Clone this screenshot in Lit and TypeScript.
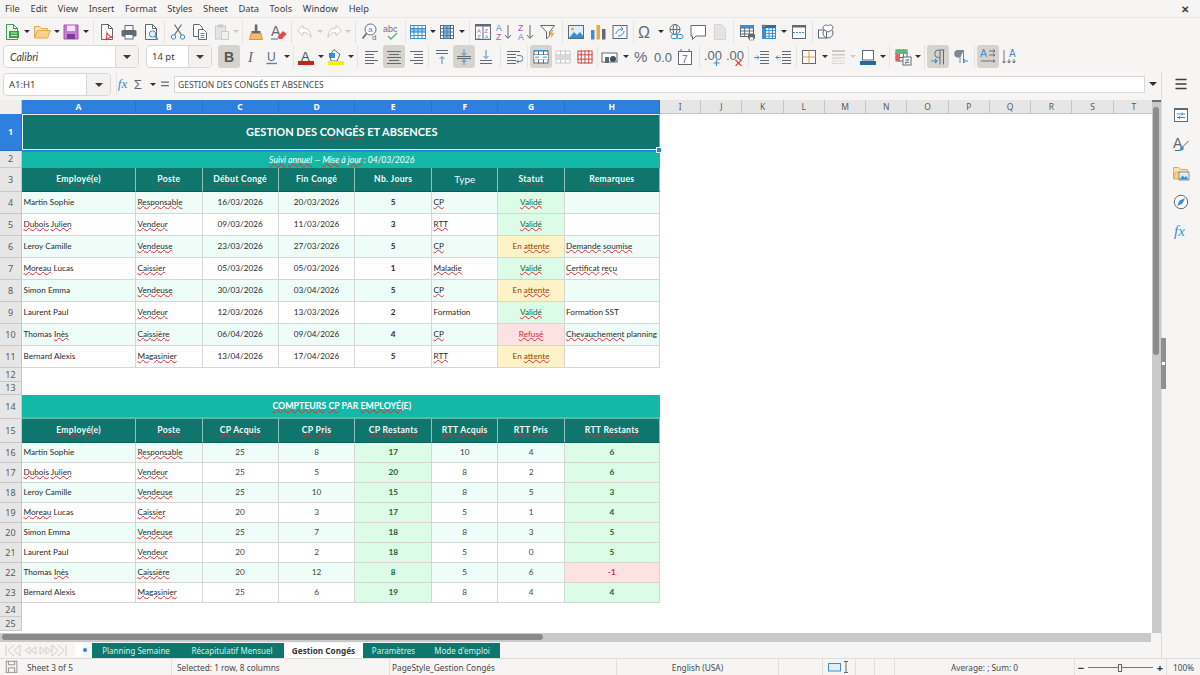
import { css, html, svg, LitElement } from "lit";
import { customElement } from "lit/decorators.js";

const G = "#5f6a75";
const B = "#3b8ed0";
const LG = "#c9c9c9";

const line = (x1: number, y1: number, x2: number, y2: number, c = G, w = 1) =>
  svg`<path d="M${x1} ${y1}L${x2} ${y2}" stroke=${c} stroke-width=${w} fill="none"/>`;
const lines = (x1: number, x2: number, ys: number[], c = G) => ys.map((y) => line(x1, y, x2, y, c));
const table = (x: number, y: number, w: number, h: number, nx: number, ny: number, c = G) => svg`
  <rect x=${x + 0.5} y=${y + 0.5} width=${w - 1} height=${h - 1} fill="#fff" stroke=${c}/>
  ${Array.from({ length: nx - 1 }, (_, i) => line(x + ((i + 1) * w) / nx, y, x + ((i + 1) * w) / nx, y + h, c))}
  ${Array.from({ length: ny - 1 }, (_, i) => line(x, y + ((i + 1) * h) / ny, x + w, y + ((i + 1) * h) / ny, c))}`;
const label = (x: number, y: number, t: string, size: number, c = G, extra = "") =>
  svg`<text x=${x} y=${y} font-size=${size} fill=${c} font-family="Liberation Sans, sans-serif" style=${extra}>${t}</text>`;
const doc = (c = G) => svg`<path d="M3.5 1.5h7l4 4v11h-11z" fill="#fff" stroke=${c}/><path d="M10.5 1.5v4h4" fill="none" stroke=${c}/>`;

const icons: Record<string, unknown> = {
  new: svg`<path d="M3.5 1.5h7l4 4v11h-11z" fill="#eef8ee" stroke="#3f9e4d"/><path d="M10.5 1.5v4h4" fill="none" stroke="#3f9e4d"/><rect x="6" y="8" width="10" height="7" fill="#3f9e4d"/><path d="M8 10h6M8 12.500h6" stroke="#cfeccf"/>`,
  open: svg`<path d="M1.500 14V3.500h5l2 2h6V8" fill="#fbe2b4" stroke="#e8a94e"/><path d="M1.500 15l3-7.500h13l-3 7.500z" fill="#fdd08a" stroke="#e8a94e"/>`,
  save: svg`<path d="M2 2h14v14H2z" fill="#c67bd6" stroke="#a550b8"/><rect x="5" y="2.500" width="8" height="5.500" fill="#f6e8f9"/><rect x="5" y="11" width="8" height="5" fill="#7e3d90"/>`,
  pdf: svg`${doc()}<path d="M9 10c2 3 4 4 6 4-2 0-5 1-7 3 1-3 1-5 1-7z" fill="none" stroke="#d9443f" stroke-width="1.200"/>`,
  print: svg`<path d="M5 7V2.500h8V7" fill="#fff" stroke=${G}/><rect x="1.500" y="7" width="15" height="6.500" rx="1.500" fill=${G}/><rect x="5" y="11.500" width="8" height="4.500" fill="#fff" stroke=${G}/>`,
  preview: svg`${doc()}<circle cx="10.500" cy="11" r="3.200" fill="#e6f2fb" stroke=${B}/><path d="M13 13.500l3 3" stroke=${B} stroke-width="1.400"/>`,
  cut: svg`<circle cx="4.500" cy="14" r="2.200" fill="none" stroke=${B}/><circle cx="13.500" cy="14" r="2.200" fill="none" stroke=${B}/><path d="M5.500 12L12.500 1.500M12.500 12L5.500 1.500" stroke=${G} stroke-width="1.200"/>`,
  copy: svg`<path d="M2.500 1.500h6l3 3v9h-9z" fill="#fff" stroke=${G}/><path d="M7.500 6.500h5l3 3v7h-8z" fill="#fff" stroke=${G}/>${lines(9.5, 13.5, [10.5, 12.5, 14.5], B)}`,
  paste: svg`<rect x="2.500" y="3" width="10" height="13" fill="#e4e4e4" stroke=${LG}/><rect x="5" y="1.500" width="5" height="3" fill=${LG}/><path d="M8.500 8.500h7v8h-7z" fill="#f0f0f0" stroke=${LG}/>`,
  brush: svg`<rect x="7.800" y="1.500" width="2.600" height="6.500" fill=${G}/><rect x="4.500" y="8" width="9" height="2.500" fill=${G}/><path d="M4 10.500h10l1.500 6h-13z" fill="#f5bb6c" stroke="#df9339"/>`,
  clear: svg`${label(2, 13, "A", 14)}${line(2, 16, 9, 16, B, 1.2)}<path d="M8.500 14l5.500-6 3.500 3-4.500 5h-3z" fill="#e34a44"/>`,
  undo: svg`<path d="M7 2.500L1.500 7.500 7 12.500V9.500c4 0 6 1 8 5 0-6-3-9.500-8-9.500z" fill="#fff" stroke=${LG}/>`,
  redo: svg`<path d="M11 2.500l5.500 5-5.500 5V9.500c-4 0-6 1-8 5 0-6 3-9.500 8-9.500z" fill="#fff" stroke=${LG}/>`,
  find: svg`<circle cx="9.500" cy="6.500" r="5.500" fill="#fff" stroke=${G}/>${label(7, 9, "a", 8, B)}<path d="M5.500 10.500l-4 5" stroke=${G} stroke-width="1.600"/>${label(11, 17, "d", 8, G)}`,
  spell: svg`${label(0, 9, "abc", 9, "#7a6a8a")}<path d="M5 13l3 3 6-6" fill="none" stroke="#58b368" stroke-width="1.400"/>`,
  trow: svg`${table(1, 2, 16, 14, 4, 4, B)}<rect x="1" y="6" width="16" height="3.500" fill=${B} opacity=".55"/>`,
  tcol: svg`${table(2, 2, 14, 14, 4, 4, G)}<rect x="6" y="2" width="6" height="14" fill=${B} opacity=".65"/>`,
  sort: svg`<rect x="1.500" y="1.500" width="15" height="15" fill="#fff" stroke=${G}/><rect x="1" y="1" width="16" height="2.500" fill=${G}/>${line(9, 3, 9, 16)}${label(3, 9.5, "A", 6, "#c04fc0")}${label(3, 15.5, "Z", 6, B)}${label(10.5, 9.5, "Z", 6, "#c04fc0")}${label(10.5, 15.5, "A", 6, B)}`,
  asc: svg`${label(1, 8, "A", 8.500, B)}${label(1, 16.5, "Z", 8.500, "#c04fc0")}<path d="M13 2v13M10 12l3 3.500 3-3.500" fill="none" stroke=${G}/>`,
  desc: svg`${label(1, 8, "Z", 8.500, "#c04fc0")}${label(1, 16.5, "A", 8.500, B)}<path d="M13 2v13M10 12l3 3.500 3-3.500" fill="none" stroke=${G}/>`,
  filter: svg`<path d="M1.500 2.500h14l-5 6.500v4l-3 3V9z" fill="#fff" stroke=${G}/><path d="M13 7l-3 5h2.500l-1 4 4-6h-2.500l1.500-3z" fill="#f2a83b"/>`,
  image: svg`<rect x="1.500" y="2.500" width="15" height="13" fill="#dff0fb" stroke=${G}/><circle cx="5.500" cy="6" r="1.500" fill="#f2a83b"/><path d="M2 15l5-6 3 3 3-3 3 4v2z" fill=${B}/>`,
  chart: svg`<rect x="2" y="7" width="3.500" height="9.500" fill=${B}/><rect x="7.500" y="2" width="3.500" height="14.500" fill="#f0a83f"/><rect x="13" y="6" width="3.500" height="10.500" fill=${G}/>`,
  pivot: svg`<rect x="2" y="2.500" width="14" height="13" fill="#f7f7f7" stroke=${G}/><path d="M5 11c0-3 3-5 7-5M12 6l-2-2M12 6l-2 2M13 8c0 3-3 5-6 5" fill="none" stroke=${B}/>`,
  omega: svg`<text x="1" y="15" font-size="16" fill=${G} font-family="Liberation Sans, sans-serif">Ω</text>`,
  link: svg`<circle cx="8" cy="6.500" r="5" fill="#fff" stroke=${G}/><ellipse cx="8" cy="6.500" rx="2" ry="5" fill="none" stroke=${G}/><path d="M3 6.500h10" stroke=${G}/><rect x="4" y="11.500" width="6.500" height="4" rx="2" fill="#fff" stroke=${B}/><rect x="9.500" y="11.500" width="6.500" height="4" rx="2" fill="none" stroke=${B}/>`,
  comment: svg`<path d="M2 2.500h14.500v10.500H7l-3.500 3.500V13H2z" fill="#fff" stroke=${G}/>`,
  headers: svg`<path d="M3.500 1.500h7l4 4v11h-11z" fill="#e4e4e4" stroke="#d6d6d6"/>`,
  prange: svg`${table(2, 2, 14, 12, 3, 4, G)}<rect x="2" y="2" width="14" height="3" fill=${B}/><rect x="10" y="11" width="7" height="5" rx="1" fill=${G}/><rect x="11.500" y="14" width="4" height="3" fill="#fff" stroke=${G} stroke-width=".6"/>`,
  freeze: svg`${table(2, 2, 14, 14, 4, 5, B)}<rect x="2" y="2" width="4" height="14" fill=${B}/><rect x="2" y="2" width="14" height="3" fill="#2a6fa8"/><path d="M4 1v3" stroke="#f0a83f"/>`,
  split: svg`<rect x="2.500" y="2.500" width="13" height="13" fill="#fff" stroke=${G}/><rect x="2" y="2" width="14" height="2.500" fill=${G}/><path d="M3 9.500h12" stroke=${B} stroke-dasharray="2 1"/>`,
  shapes: svg`<rect x="1.500" y="7" width="8" height="8" fill="#fff" stroke=${G}/><circle cx="11" cy="10" r="5" fill="none" stroke=${G}/><path d="M11 3c1.500-2 5-1 5 1.500S13 8 11 9C9 8 6 6.500 6 4.500S9.500 1 11 3z" fill="#fff" stroke=${G}/>`,
  bold: svg`${label(4, 14, "B", 14, "#565656", "font-weight:700")}`,
  italic: svg`<text x="6" y="14" font-size="15" fill=${G} font-style="italic" font-family="Liberation Serif, serif">I</text>`,
  under: svg`${label(4, 13, "U", 12)}${line(3.5, 15.5, 14, 15.5, B, 1.4)}`,
  fcolor: svg`${label(4, 12.5, "A", 13, "#44505a")}<rect x="1" y="13" width="16" height="4" fill="#c9211e"/>`,
  hcolor: svg`<path d="M7 1.500l6 5-3 6.500H4L3 7z" fill="#f7f7f7" stroke=${G}/><rect x="2" y="5" width="6" height="5" fill=${B}/><rect x="1" y="13" width="16" height="4" fill="#f5f000"/>`,
  aleft: svg`${lines(2, 15, [3.5, 12.5])}${lines(2, 11, [6.5, 9.5, 15.5])}`,
  acenter: svg`${lines(2, 16, [3.5, 9.5, 15.5])}${lines(4, 14, [6.5, 12.5])}`,
  aright: svg`${lines(3, 16, [3.5, 12.5])}${lines(7, 16, [6.5, 9.5, 15.5])}`,
  vtop: svg`${lines(3, 15, [2.5, 5.5])}<path d="M9 16V9M6.500 11L9 8.500 11.500 11" fill="none" stroke=${B}/>`,
  vmid: svg`${lines(2, 16, [8.5, 10.5])}<path d="M9 1.500V7M6.500 5L9 7.500 11.500 5M9 17v-5M6.500 14L9 11.500 11.500 14" fill="none" stroke=${B}/>`,
  vbot: svg`${lines(3, 15, [12.5, 15.5])}<path d="M9 2v8M6.500 8L9 10.500 11.500 8" fill="none" stroke=${B}/>`,
  wrap: svg`${lines(2, 15, [3.5])}${lines(2, 11, [6.5, 9.5, 12.5, 15.5])}<path d="M12 7.500h3a2 2 0 0 1 0 6h-3M13.500 12l-2 1.500 2 1.500" fill="none" stroke=${B}/>`,
  merge: svg`${table(1.500, 2.500, 15, 13, 3, 3, G)}<rect x="2" y="7" width="14" height="4.500" fill="#fff"/><path d="M3 9.200h4M11 9.200h4" stroke=${B}/><path d="M2 2.500h14" stroke=${B}/>`,
  mergeoff: svg`${table(1.500, 2.500, 15, 13, 3, 3, LG)}<rect x="2" y="7" width="14" height="4.500" fill="#d8d8d8"/>`,
  split2: svg`${table(1.500, 2.500, 15, 13, 4, 3, "#c9433f")}`,
  currency: svg`<rect x="1" y="5" width="15" height="9" fill="#fff" stroke=${G}/><rect x="4" y="9" width="4" height="6" fill=${G}/><circle cx="12" cy="11" r="3" fill="#44505a"/>`,
  percent: svg`<text x="1" y="14" font-size="15" fill=${G} font-family="Liberation Sans, sans-serif">%</text>`,
  num: svg`<text x="0" y="14" font-size="13" fill=${G} font-family="Liberation Sans, sans-serif">0.0</text>`,
  date: svg`<rect x="2.500" y="3.500" width="13" height="13" fill="#fff" stroke=${G}/><path d="M2 3.500h14M5 1v3M13 1v3" stroke=${G}/>${label(6, 14.5, "7", 10)}`,
  adddec: svg`<text x="0" y="12" font-size="13" fill=${G} font-family="Liberation Sans, sans-serif">.00</text><path d="M12.500 12v6M9.500 15h6" stroke=${B} stroke-width="1.200"/>`,
  deldec: svg`<text x="0" y="12" font-size="13" fill=${G} font-family="Liberation Sans, sans-serif">.00</text><path d="M9.500 12l6 6M15.500 12l-6 6" stroke="#e0443e" stroke-width="1.200"/>`,
  indent: svg`${lines(7, 16, [3.5, 6.5, 9.5, 12.5, 15.5])}<path d="M1 9.500h5M4 7.500l2 2-2 2" fill="none" stroke=${B}/>`,
  outdent: svg`${lines(7, 16, [3.5, 6.5, 9.5, 12.5, 15.5])}<path d="M6 9.500H1M3 7.500l-2 2 2 2" fill="none" stroke=${B}/>`,
  borders: svg`<rect x="2.500" y="2.500" width="13" height="13" fill="#fff" stroke=${G}/><path d="M9 2.500v13M2.500 9h13" stroke="#e8963c"/>`,
  lstyle: svg`<rect x="2" y="2" width="13" height="2" fill=${LG}/><rect x="2" y="6" width="13" height="1.500" fill=${LG}/><path d="M2 10h13" stroke=${LG}/><path d="M2 13h13M2 15.500h13" stroke=${LG} stroke-dasharray="1.500 1"/>`,
  bcolor: svg`<rect x="3.500" y="2.500" width="11" height="9.500" fill="#fff" stroke=${G}/><rect x="1" y="13" width="16" height="4" fill="#1f6aa8"/>`,
  cond: svg`${table(1.500, 1.500, 12, 12, 3, 3, G)}<rect x="2" y="2" width="11" height="4" fill="#6ab377"/><rect x="2" y="6" width="4" height="7" fill="#e0645f"/><rect x="9" y="9" width="8" height="8" fill="#fff" stroke=${G}/><path d="M11 12h4M11 14.500h4M14.500 11l-3 5" stroke=${G} stroke-width=".8"/>`,
  pltr: svg`<path d="M15.500 2H9.500a3.800 3.800 0 0 0 0 7.600h1.500M11 2v14.500M14.500 2v14.500" fill="none" stroke=${G}/><path d="M2 13h6M6 11l2 2-2 2" fill="none" stroke=${B} stroke-width="1.200"/>`,
  prtl: svg`<path d="M13 2H7a3.800 3.800 0 0 0 0 7.600h2z" fill="#7d8892"/><path d="M9 2v13M12.500 2v13" stroke="#7d8892"/><path d="M17 13h-5M14 11l-2 2 2 2" fill="none" stroke=${B}/>`,
  tltr: svg`${label(1, 9, "A", 10.500, B)}<path d="M10 3h6M14 1.500L16 3l-2 1.500M10 7h6M14 5.500L16 7l-2 1.500M2 13h14M14 11.500l2 1.500-2 1.500" fill="none" stroke=${G} stroke-width=".9"/>`,
  ttb: svg`${label(8, 9, "A", 10, B)}<path d="M3 2v13M1.500 13L3 15l1.500-2M8 11v4M6.500 13L8 15l1.500-2M13 11v4M11.500 13L13 15l1.500-2" fill="none" stroke=${G} stroke-width=".9"/>`,
  fx: svg`<text x="2" y="14" font-size="15" fill=${B} font-style="italic" font-family="Liberation Serif, serif">fx</text>`,
  sigma: svg`<text x="3" y="15" font-size="15" fill=${G} font-family="Liberation Sans, sans-serif">Σ</text>`,
  eq: svg`<path d="M4 6.500h10M4 11h10" stroke=${G} stroke-width="1.600"/>`,
  burger: svg`<path d="M3.500 4.500h11M3.500 9h11M3.500 13.500h11" stroke="#3d3d3d" stroke-width="1.300"/>`,
  props: svg`<rect x="2.500" y="2.500" width="13" height="13" fill="#fff" stroke=${G}/><rect x="2" y="2" width="14" height="2" fill=${G}/><path d="M5 8h8M5 11.500h8" stroke=${B}/><path d="M10 6.500v3M7.500 10v3" stroke=${B}/>`,
  styles: svg`${label(1, 13, "A", 14)}<path d="M3 15.500h5" stroke=${G}/><path d="M16.500 6l-6 6" stroke=${G}/><path d="M10.500 11.500c-2 0-2.500 2-3 4 2 .5 4-.5 4.500-2.500z" fill=${B}/>`,
  gallery: svg`<path d="M1.500 15V3.500h5l2 2h7V8" fill="#fbe2b4" stroke="#e8a94e"/><path d="M1.500 15l2-7h5v7z" fill="#fdd08a" stroke="#e8a94e"/><rect x="7" y="8" width="10" height="8" fill="#dcedf9" stroke=${G} stroke-width=".7"/><path d="M7.500 15.500l3-4 2 2 1.500-1.500 2.500 3.500z" fill=${B}/>`,
  nav: svg`<circle cx="9" cy="9" r="6.700" fill="#fff" stroke=${G}/><path d="M13 5L10.500 10.500 5 13l2.500-5.500z" fill=${B}/>`,
  floppy: svg`<rect x="2.500" y="2.500" width="12" height="12.500" fill="none" stroke="#8a8a8a"/><path d="M5 2.500v4h7v-4M5 15v-5h7v5" fill="none" stroke="#8a8a8a"/>`,
};

const ic = (name: string, size = 18) =>
  html`<svg width=${size} height=${size} viewBox="0 0 18 18">${icons[name]}</svg>`;

// [icon, width]; "|" is a separator, "v" a small dropdown arrow, "w" a greyed one
type Item = [string, number, boolean?];
const bar1: Item[] = [
  ["new", 22], ["v", 8], ["open", 22], ["v", 7], ["save", 22], ["v", 8], ["|", 6], ["pdf", 22], ["print", 22], ["preview", 22], ["|", 5],
  ["cut", 22], ["copy", 22], ["paste", 22], ["w", 6], ["|", 6], ["brush", 22], ["clear", 22], ["|", 5], ["undo", 22], ["w", 7], ["redo", 22], ["w", 6], ["|", 8],
  ["find", 22], ["spell", 22], ["|", 4], ["trow", 22], ["v", 7], ["tcol", 22], ["v", 8], ["|", 6], ["sort", 21], ["asc", 22], ["desc", 22], ["filter", 22], ["|", 6],
  ["image", 22], ["chart", 22], ["pivot", 22], ["|", 4], ["omega", 21], ["v", 9], ["link", 22], ["comment", 22], ["headers", 22], ["|", 5], ["prange", 22], ["freeze", 22], ["v", 8], ["split", 22], ["|", 5], ["shapes", 22],
];
const bar2: Item[] = [
  ["bold", 22, true], ["italic", 22], ["under", 20], ["v", 10], ["|", 3], ["fcolor", 22], ["v", 8], ["hcolor", 22], ["v", 7], ["|", 7],
  ["aleft", 22], ["acenter", 22, true], ["aright", 21], ["|", 5], ["vtop", 22], ["vmid", 22, true], ["vbot", 22], ["|", 6], ["wrap", 22], ["|", 5],
  ["merge", 22, true], ["mergeoff", 22], ["split2", 22], ["|", 3], ["currency", 22], ["v", 10], ["percent", 21], ["num", 22], ["date", 22], ["|", 6],
  ["adddec", 22], ["deldec", 22], ["|", 5], ["indent", 22], ["outdent", 22], ["|", 3], ["borders", 22], ["v", 9], ["lstyle", 20], ["w", 8], ["bcolor", 22], ["v", 8], ["|", 5],
  ["cond", 22], ["v", 8], ["|", 5], ["pltr", 22, true], ["prtl", 22], ["|", 6], ["tltr", 22, true], ["ttb", 22],
];

const columns = "ABCDEFGHIJKLMNOPQRST".split("");
const menu = ["File", "Edit", "View", "Insert", "Format", "Styles", "Sheet", "Data", "Tools", "Window", "Help"];

const leaves: string[][] = [
  ["Martin Sophie", "~Responsable~", "16/03/2026", "20/03/2026", "5", "~CP~", "ok", ""],
  ["~Dubois~ ~Julien~", "~Vendeur~", "09/03/2026", "11/03/2026", "3", "~RTT~", "ok", ""],
  ["Leroy Camille", "~Vendeuse~", "23/03/2026", "27/03/2026", "5", "~CP~", "wait", "~Demande~ ~soumise~"],
  ["~Moreau~ Lucas", "~Caissier~", "05/03/2026", "05/03/2026", "1", "~Maladie~", "ok", "~Certificat~ ~reçu~"],
  ["Simon Emma", "~Vendeuse~", "30/03/2026", "03/04/2026", "5", "~CP~", "wait", ""],
  ["Laurent Paul", "~Vendeur~", "12/03/2026", "13/03/2026", "2", "Formation", "ok", "Formation SST"],
  ["Thomas ~Inès~", "~Caissière~", "06/04/2026", "09/04/2026", "4", "~CP~", "no", "~Chevauchement~ planning"],
  ["Bernard Alexis", "~Magasinier~", "13/04/2026", "17/04/2026", "5", "~RTT~", "wait", ""],
];
const counters: (string | number)[][] = [
  ["Martin Sophie", "~Responsable~", 25, 8, 17, 10, 4, 6],
  ["~Dubois~ ~Julien~", "~Vendeur~", 25, 5, 20, 8, 2, 6],
  ["Leroy Camille", "~Vendeuse~", 25, 10, 15, 8, 5, 3],
  ["~Moreau~ Lucas", "~Caissier~", 20, 3, 17, 5, 1, 4],
  ["Simon Emma", "~Vendeuse~", 25, 7, 18, 8, 3, 5],
  ["Laurent Paul", "~Vendeur~", 20, 2, 18, 5, 0, 5],
  ["Thomas ~Inès~", "~Caissière~", 20, 12, 8, 5, 6, -1],
  ["Bernard Alexis", "~Magasinier~", 25, 6, 19, 8, 4, 4],
];
const status: Record<string, [string, string]> = {
  ok: ["~Validé~", "green"],
  wait: ["En ~attente~", "amber"],
  no: ["~Refusé~", "red"],
};
const tabs = ["Planning Semaine", "Récapitulatif Mensuel", "Gestion Congés", "Paramètres", "Mode d'emploi"];

// ~word~ gets the spell-check squiggle
const sp = (text: string) =>
  html`<span>${text.split(/(~[^~]+~)/).map((p) => (p.startsWith("~") ? html`<u>${p.slice(1, -1)}</u>` : p))}</span>`;

@customElement("app-root")
export class AppRoot extends LitElement {
  static styles = css`
    :host {
      display: block;
      width: 1200px;
      height: 675px;
      overflow: hidden;
      background: #f6f5f4;
      color: #3d3d3d;
      font-family: "Noto Sans", sans-serif;
      font-size: 9.5px;
    }
    svg {
      display: block;
      flex: none;
    }

    .menubar {
      display: flex;
      align-items: center;
      justify-content: space-between;
      height: 17px;
      padding: 0 5px;
      box-sizing: border-box;
    }
    .menu {
      display: flex;
      gap: 10.6px;
      font-size: 9.3px;
    }
    .close {
      font-size: 10px;
      font-weight: 700;
      margin-right: 6px;
    }

    .toolbar {
      display: flex;
      align-items: center;
      height: 28px;
      padding-left: 1px;
      border-top: 1px solid #eae8e5;
      box-sizing: border-box;
    }
    .toolbar.second {
      height: 27px;
      border-top: 0;
      padding: 0 0 4px 3px;
    }
    .item {
      display: flex;
      align-items: center;
      justify-content: center;
      height: 23px;
      flex: none;
      border-radius: 3px;
    }
    .item.on {
      background: #d6d3cf;
    }
    .sep {
      display: flex;
      justify-content: center;
      flex: none;
    }
    .sep::before {
      content: "";
      width: 1px;
      height: 22px;
      background: #e6e4e1;
    }
    .arr {
      width: 0;
      height: 0;
      border-left: 3px solid transparent;
      border-right: 3px solid transparent;
      border-top: 3px solid #2e2e2e;
    }
    .arr.dim {
      border-top-color: #c9c9c9;
    }

    .combo {
      display: flex;
      height: 23px;
      box-sizing: border-box;
      flex: none;
      background: #fff;
      border: 1px solid #d9d7d3;
      border-radius: 4px;
      overflow: hidden;
    }
    .combo span {
      flex: 1;
      display: flex;
      align-items: center;
    }
    .combo b {
      display: flex;
      align-items: center;
      justify-content: center;
      width: 22px;
      background: #f3f2f0;
      border-left: 1px solid #d9d7d3;
    }
    .combo b .arr {
      border-left-width: 4px;
      border-right-width: 4px;
      border-top-width: 4px;
      border-top-color: #3a3a3a;
    }
    .font-name {
      width: 136px;
      margin-right: 7px;
    }
    .font-name span {
      padding-left: 6px;
      font-family: Lato, sans-serif;
      font-style: italic;
      font-size: 10.5px;
    }
    .font-size {
      width: 66px;
      margin-right: 6px;
    }
    .font-size span {
      padding-left: 5px;
    }

    .work {
      display: flex;
      height: 586px;
    }
    .left {
      flex: 1;
      min-width: 0;
      display: flex;
      flex-direction: column;
    }
    .formula {
      display: flex;
      align-items: flex-start;
      height: 28px;
      padding: 1px 0 0 3px;
      box-sizing: border-box;
    }
    .name-box {
      width: 108px;
      margin-right: 5px;
    }
    .name-box span {
      padding-left: 5px;
    }
    .name-box b {
      width: 23px;
    }
    .formula .item {
      height: 22px;
    }
    .input {
      width: 971px;
      height: 17px;
      margin: 3px 0 0 2px;
      padding-left: 3px;
      box-sizing: border-box;
      background: #fff;
      border: 1px solid #d9d7d3;
      font-size: 8.5px;
      line-height: 15px;
      color: #4a4a4a;
    }
    .formula-drop {
      width: 16px;
      height: 22px;
      display: flex;
      align-items: center;
      justify-content: center;
    }
    .formula-drop .arr {
      border-left-width: 4px;
      border-right-width: 4px;
      border-top-width: 4px;
    }

    .sheet-wrap {
      display: flex;
      height: 533px;
    }
    .sheet {
      position: relative;
      width: 1152px;
      overflow: hidden;
      background: #fff;
    }
    .grid {
      display: grid;
      grid-template-columns: 22px 114px 66.6px 76px 76.9px 76.5px 66.5px 66.1px 95.4px repeat(12, 41.25px);
      grid-template-rows: 14px 37px 17px 24px repeat(8, 22px) 14px 13px 24px 24px repeat(8, 20px) 14px 14px;
      font-family: Lato, sans-serif;
      font-size: 8.2px;
      color: #2a2a2a;
    }
    .ch,
    .rh {
      display: flex;
      align-items: center;
      justify-content: center;
      font-family: "Noto Sans", sans-serif;
      font-size: 8.5px;
      color: #5a5a5a;
      background: #e6e6e6;
      box-sizing: border-box;
    }
    .ch {
      border-right: 1px solid #c6c6c6;
      border-bottom: 1px solid #c6c6c6;
    }
    .corner {
      background: #f0efed;
      border-right: 1px solid #c6c6c6;
    }
    .rh {
      grid-column: 1;
      font-size: 9px;
      border-bottom: 1px solid #c9c9c9;
      border-right: 1px solid #c6c6c6;
    }
    .ch.sel,
    .rh.sel {
      background: #2f80de;
      color: #fff;
      font-weight: 700;
      border-color: #2a72c8;
    }
    .c {
      display: flex;
      align-items: center;
      min-width: 0;
      white-space: nowrap;
      padding-left: 1.5px;
      box-sizing: border-box;
      border-right: 1px solid #d6d6d6;
      border-bottom: 1px solid #d6d6d6;
      background: #fff;
    }
    .c.odd {
      background: #effdf9;
    }
    .mid {
      justify-content: center;
      padding-left: 0;
    }
    .strong {
      font-weight: 700;
    }
    .soft {
      color: #444;
    }
    .green {
      background: #dcfce7 !important;
      color: #166534;
    }
    .amber {
      background: #fef3c7 !important;
      color: #92400e;
    }
    .red {
      background: #fee2e2 !important;
      color: #dc2626;
    }
    .wide {
      grid-column: 2 / span 8;
      justify-content: center;
      color: #fff;
      border: 0;
    }
    .title {
      background: #0f766e;
      font-size: 11px;
      font-weight: 700;
      padding-bottom: 2px;
    }
    .subtitle {
      background: #14b8a6;
      font-style: italic;
      font-size: 8.6px;
      border-top: 1px solid #1a92b0;
    }
    .band {
      background: #14b8a6;
      font-weight: 700;
      font-size: 8.8px;
      border-bottom: 2px solid #5fb5aa;
    }
    .th {
      justify-content: center;
      padding: 0;
      background: #0f766e;
      color: #f0fdfa;
      font-weight: 700;
      font-size: 8.6px;
      letter-spacing: 0.3px;
      border-right: 1px solid #8cc4bd;
      border-bottom: 1px solid #0b5f58;
    }
    .type {
      font-size: 10px;
      letter-spacing: 0;
      font-weight: 400;
    }
    u {
      text-decoration: underline wavy #d3302f 1px;
      text-underline-offset: 0;
    }
    .selection {
      position: absolute;
      left: 22px;
      top: 14px;
      width: 638px;
      height: 36px;
      box-sizing: border-box;
      border: 1px solid #e4f4f1;
      border-right-color: #6fa9e6;
      box-shadow: 0 1px 0 #2f80de;
      pointer-events: none;
    }
    .selection::after {
      content: "";
      position: absolute;
      right: -3px;
      bottom: -4px;
      width: 4px;
      height: 4px;
      background: #2f80de;
      border: 1px solid #fff;
    }
    .vscroll {
      width: 9px;
      background: #c9c9c9;
      padding-top: 5px;
      box-sizing: border-box;
      border-top: 2px solid #6e6e6e;
    }
    .vthumb {
      width: 6px;
      height: 248px;
      margin-left: 1px;
      background: #8c8c8c;
      border-radius: 3px;
    }

    .hscroll {
      height: 9px;
      width: 1151px;
      background: #c9c9c9;
      padding: 1px 2px;
      box-sizing: border-box;
    }
    .hthumb {
      width: 541px;
      height: 6px;
      background: #8a8a8a;
      border-radius: 3px;
    }

    .tabbar {
      display: flex;
      align-items: center;
      height: 16px;
      margin-top: 0.5px;
    }
    .tabnav {
      width: 75px;
      height: 15px;
      padding-left: 5px;
      box-sizing: border-box;
    }
    .addtab {
      width: 17px;
      height: 15px;
      display: flex;
      align-items: center;
    }
    .addtab i {
      width: 8px;
      height: 14px;
      background: #fff;
    }
    .addtab b {
      width: 4px;
      height: 4px;
      border-radius: 50%;
      background: #3584c4;
    }
    .tabs {
      display: grid;
      grid-template-columns: 88px 104px 79px 61px 76px;
      height: 15px;
    }
    .tab {
      display: flex;
      align-items: center;
      justify-content: center;
      background: #0f766e;
      color: #d5efeb;
      font-size: 8px;
    }
    .tab.on {
      background: #fff;
      color: #333;
      font-weight: 700;
      font-size: 8.2px;
    }

    .sidebar {
      position: relative;
      width: 39px;
      box-sizing: border-box;
      border-left: 1px solid #dcdad7;
      display: flex;
      flex-direction: column;
      align-items: center;
      gap: 11px;
      padding: 3px 0 0 0;
    }
    .sidebar svg:first-of-type {
      margin-bottom: 2px;
    }
    .handle {
      position: absolute;
      left: -1px;
      top: 266px;
      width: 5px;
      height: 51px;
      background: #8f8f8f;
    }
    .handle::after {
      content: "";
      position: absolute;
      left: 1px;
      top: 24px;
      width: 3px;
      height: 3px;
      background: #fff;
    }

    .status {
      display: grid;
      grid-template-columns: 172px 218px 227px 162px 44px 33px 19px 20px 180px 92px 33px;
      height: 17px;
      box-sizing: border-box;
      border-top: 1px solid #dedcd9;
      font-size: 8.3px;
      color: #4a4a4a;
    }
    .status > div {
      display: flex;
      align-items: center;
      box-sizing: border-box;
      border-right: 1px solid #e2e0dd;
      white-space: nowrap;
    }
    .status > div:last-child {
      border-right: 0;
    }
    .st-first {
      padding-left: 4px;
      gap: 7px;
    }
    .st-pad {
      padding-left: 5px;
    }
    .st-tight {
      padding-left: 2px;
    }
    .st-mid {
      justify-content: center;
    }
    .zoom {
      gap: 3px;
      padding-left: 2px;
    }
    .zoom i {
      font-style: normal;
      font-size: 11px;
      font-weight: 700;
      color: #333;
      width: 8px;
      text-align: center;
    }
    .slider {
      position: relative;
      width: 65px;
      height: 1px;
      background: #7a7a7a;
    }
    .slider::after {
      content: "";
      position: absolute;
      left: 30px;
      top: -3px;
      width: 2px;
      height: 6px;
      background: #f6f5f4;
      border: 1px solid #666;
    }
  `;

  private renderBar(items: Item[]) {
    return items.map(([name, w, on]) => {
      if (name === "|") return html`<div class="sep" style="width:${w}px"></div>`;
      if (name === "v" || name === "w")
        return html`<div class="item" style="width:${w}px"><div class="arr ${name === "w" ? "dim" : ""}"></div></div>`;
      return html`<div class="item ${on ? "on" : ""}" style="width:${w}px">${ic(name)}</div>`;
    });
  }

  private renderTop() {
    return html`
      <div class="menubar">
        <div class="menu">${menu.map((m) => html`<span>${m}</span>`)}</div>
        <span class="close">✕</span>
      </div>
      <div class="toolbar">${this.renderBar(bar1)}</div>
      <div class="toolbar second">
        <div class="combo font-name"><span>Calibri</span><b><div class="arr"></div></b></div>
        <div class="combo font-size"><span>14 pt</span><b><div class="arr"></div></b></div>
        ${this.renderBar(bar2)}
      </div>
    `;
  }

  private renderFormula() {
    return html`
      <div class="formula">
        <div class="combo name-box"><span>A1:H1</span><b><div class="arr"></div></b></div>
        <div class="sep" style="width:1px"></div>
        <div class="item" style="width:14px">${ic("fx", 16)}</div>
        <div class="item" style="width:16px">${ic("sigma", 16)}</div>
        <div class="item" style="width:11px"><div class="arr"></div></div>
        <div class="item" style="width:14px">${ic("eq", 14)}</div>
        <div class="input">GESTION DES CONGÉS ET ABSENCES</div>
        <div class="formula-drop"><div class="arr"></div></div>
      </div>
    `;
  }

  private renderHead(names: string[], row: number) {
    return html`
      <div class="rh">${row}</div>
      ${names.map((n) => html`<div class="c th ${n === "Type" ? "type" : ""}">${sp(n)}</div>`)}
    `;
  }

  private renderLeaves() {
    return leaves.map((r, i) => {
      const odd = i % 2 === 0 ? "odd" : "";
      const [label, tone] = status[r[6]];
      return html`
        <div class="rh">${i + 4}</div>
        <div class="c ${odd}">${sp(r[0])}</div>
        <div class="c ${odd}">${sp(r[1])}</div>
        <div class="c mid ${odd}">${r[2]}</div>
        <div class="c mid ${odd}">${r[3]}</div>
        <div class="c mid strong ${odd}">${r[4]}</div>
        <div class="c ${odd}">${sp(r[5])}</div>
        <div class="c mid ${tone}">${sp(label)}</div>
        <div class="c ${odd}">${sp(r[7])}</div>
      `;
    });
  }

  private renderCounters() {
    return counters.map((r, i) => {
      const odd = i % 2 === 0 ? "odd" : "";
      const rest = Number(r[7]) < 0 ? "red" : "green";
      return html`
        <div class="rh">${i + 16}</div>
        <div class="c ${odd}">${sp(String(r[0]))}</div>
        <div class="c ${odd}">${sp(String(r[1]))}</div>
        <div class="c mid soft ${odd}">${r[2]}</div>
        <div class="c mid soft ${odd}">${r[3]}</div>
        <div class="c mid strong green">${r[4]}</div>
        <div class="c mid soft ${odd}">${r[5]}</div>
        <div class="c mid soft ${odd}">${r[6]}</div>
        <div class="c mid strong ${rest}">${r[7]}</div>
      `;
    });
  }

  private renderSheet() {
    return html`
      <div class="sheet-wrap">
        <div class="sheet">
          <div class="grid">
            <div class="corner"></div>
            ${columns.map((c, i) => html`<div class="ch ${i < 8 ? "sel" : ""}">${c}</div>`)}
            <div class="rh sel">1</div>
            <div class="c wide title">${sp("GESTION DES ~CONGÉS~ ET ABSENCES")}</div>
            <div class="rh">2</div>
            <div class="c wide subtitle">${sp("~Suivi~ ~annuel~ — ~Mise~ à ~jour~ : 04/03/2026")}</div>
            ${this.renderHead(["~Employé~(e)", "~Poste~", "~Début~ ~Congé~", "Fin ~Congé~", "Nb. ~Jours~", "Type", "~Statut~", "~Remarques~"], 3)}
            ${this.renderLeaves()}
            <div class="rh">12</div>
            <div class="rh">13</div>
            <div class="rh">14</div>
            <div class="c wide band">${sp("~COMPTEURS~ ~CP~ PAR ~EMPLOYÉ~(E)")}</div>
            ${this.renderHead(["~Employé~(e)", "~Poste~", "~CP~ ~Acquis~", "~CP~ ~Pris~", "~CP~ ~Restants~", "~RTT~ ~Acquis~", "~RTT~ ~Pris~", "~RTT~ ~Restants~"], 15)}
            ${this.renderCounters()}
            <div class="rh">24</div>
            <div class="rh">25</div>
          </div>
          <div class="selection"></div>
        </div>
        <div class="vscroll"><div class="vthumb"></div></div>
      </div>
      <div class="hscroll"><div class="hthumb"></div></div>
    `;
  }

  private renderTabs() {
    return html`
      <div class="tabbar">
        <div class="tabnav">
          <svg width="62" height="15" viewBox="0 0 62 15" fill="none" stroke="#cfcfcf">
            <path d="M1 2v11M9 2L3 7.500 9 13M15 2L9 7.500 15 13V2z" />
            <path d="M25 4l-5 3.500 5 3.500zM31 4l-5 3.500 5 3.500z" />
            <path d="M35 4l5 3.500-5 3.500zM41 4l5 3.500-5 3.500z" />
            <path d="M47 2v11l6-5.500zM53 2l6 5.500-6 5.500M61 2v11" />
          </svg>
        </div>
        <div class="addtab"><i></i><b></b></div>
        <div class="tabs">${tabs.map((t, i) => html`<div class="tab ${i === 2 ? "on" : ""}">${t}</div>`)}</div>
      </div>
    `;
  }

  private renderStatus() {
    return html`
      <div class="status">
        <div class="st-first">${ic("floppy", 16)}<span>Sheet 3 of 5</span></div>
        <div class="st-pad">Selected: 1 row, 8 columns</div>
        <div class="st-tight">PageStyle_Gestion Congés</div>
        <div class="st-mid">English (USA)</div>
        <div></div>
        <div class="st-mid">
          <svg width="24" height="14" viewBox="0 0 24 14" fill="none">
            <rect x="1.500" y="3.500" width="12" height="7.500" fill="#dff0fb" stroke="#3b8ed0" />
            <path d="M17 1.500h4M19 1.500v11M17 12.500h4" stroke="#5f6a75" />
          </svg>
        </div>
        <div></div>
        <div></div>
        <div class="st-mid">Average: ; Sum: 0</div>
        <div class="zoom"><i>−</i><div class="slider"></div><i>+</i></div>
        <div class="st-mid">100%</div>
      </div>
    `;
  }

  render() {
    return html`
      ${this.renderTop()}
      <div class="work">
        <div class="left">
          ${this.renderFormula()} ${this.renderSheet()} ${this.renderTabs()}
        </div>
        <div class="sidebar">
          ${ic("burger")} ${ic("props")} ${ic("styles")} ${ic("gallery")} ${ic("nav")} ${ic("fx")}
          <div class="handle"></div>
        </div>
      </div>
      ${this.renderStatus()}
    `;
  }
}

declare global {
  interface HTMLElementTagNameMap {
    "app-root": AppRoot;
  }
}
